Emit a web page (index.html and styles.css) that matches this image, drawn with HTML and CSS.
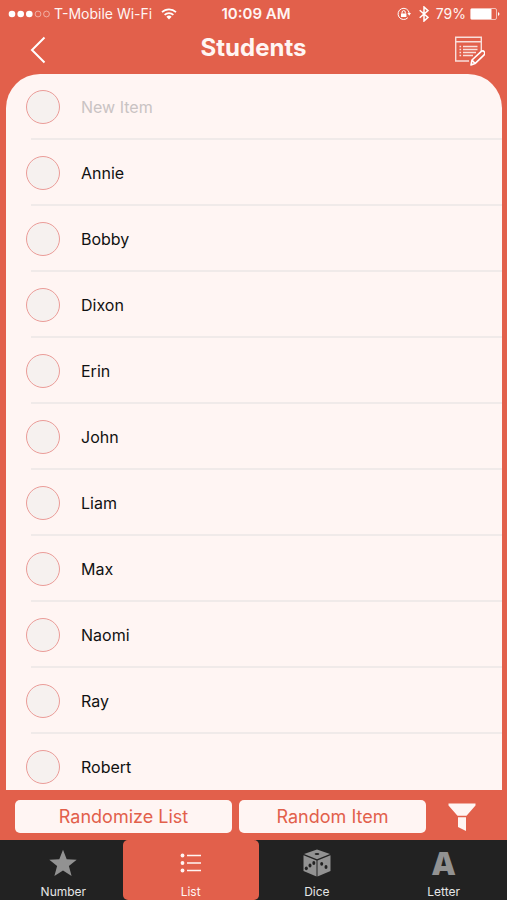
FILE: index.html
```html
<!DOCTYPE html>
<html lang="en">
<head>
<meta charset="utf-8">
<meta name="viewport" content="width=device-width, initial-scale=1">
<title>Students</title>
<link rel="stylesheet" href="styles.css">
</head>
<body>
<div class="status">
  <div class="status-side">
    <svg width="42" height="12" viewBox="0 0 42 12" aria-hidden="true">
      <g fill="#fff"><circle cx="4" cy="6" r="3.3"/><circle cx="12.7" cy="6" r="3.3"/><circle cx="21.3" cy="6" r="3.3"/></g>
      <g fill="none" stroke="#fff" stroke-opacity=".6" stroke-width=".8"><circle cx="30" cy="6" r="2.9"/><circle cx="38.5" cy="6" r="2.9"/></g>
    </svg>
    <span class="carrier">T-Mobile Wi-Fi</span>
    <svg class="wifi" width="16" height="12" viewBox="0 0 16 12" aria-hidden="true">
      <g fill="none" stroke="#fff" stroke-width="1.7"><path d="M1 4.2a10 10 0 0 1 14 0"/><path d="M3.6 6.9a6.3 6.3 0 0 1 8.8 0"/></g>
      <path fill="#fff" d="M8 11.5 5.4 8.8a3.8 3.8 0 0 1 5.2 0z"/>
    </svg>
  </div>
  <time class="clock">10:09 AM</time>
  <div class="status-side status-right">
    <svg width="14" height="14" viewBox="0 0 14 14" aria-hidden="true">
      <path fill="none" stroke="#fff" stroke-width="1" d="M10.8 10.7A5.6 5.6 0 1 1 12.2 6"/>
      <path fill="#fff" d="M10.4 6h3.6l-1.8 2.8zM4 6.4h5.4v3.7H4z"/>
      <path fill="none" stroke="#fff" stroke-width="1" d="M5.1 6.6V5.2a1.6 1.6 0 0 1 3.2 0v1.4"/>
    </svg>
    <svg class="bluetooth" width="10" height="16" viewBox="0 0 10 16" aria-hidden="true">
      <path fill="none" stroke="#fff" stroke-width="1.5" d="M.7 4.2 9 11.4 5 15V1l4 3.6-8.3 7.2"/>
    </svg>
    <span>79%</span>
    <svg class="battery" width="30" height="12" viewBox="0 0 30 12" aria-hidden="true">
      <rect x=".5" y=".5" width="26" height="11" rx="1.5" fill="none" stroke="#fff" stroke-opacity=".6"/>
      <path fill="#fff" d="M1 1h20.500v10H1zM28 4q3 2 0 4z"/>
    </svg>
  </div>
</div>

<header class="header">
  <button class="icon-button" type="button" aria-label="Back">
    <svg width="16" height="28" viewBox="0 0 16 28"><path fill="none" stroke="#fff" stroke-width="2" d="M14.500 1.500 2 14l12.500 12.500"/></svg>
  </button>
  <h1 class="title">Students</h1>
  <button class="icon-button" type="button" aria-label="Edit list">
    <svg width="32" height="32" viewBox="0 0 32 32">
      <g fill="none" stroke="#fff" stroke-opacity=".8" stroke-width="1.4">
        <path d="M16 27H2.700V3.200h25.600V17M2.700 7.700h25.600"/>
        <path d="M6.500 12.500h1.600M10 12.500h14.500M6.500 15.500h1.600M10 15.500h14.500M6.500 18.500h1.600M10 18.500h13M6.500 21.500h1.600M10 21.500h10"/>
      </g>
      <path fill="#e2604b" stroke="#fff" stroke-width="1.600" stroke-linejoin="round" d="m18 31 1-5L28.300 17.300q2-1 3 .6t-.2 3L22 29.600zM19 26l3 3.600"/>
    </svg>
  </button>
</header>

<main class="panel">
  <ul class="list">
    <li class="row"><input class="check" type="checkbox" aria-label="Select new item"><input class="new-item" type="text" placeholder="New Item" aria-label="New item"></li>
    <li class="row"><input class="check" type="checkbox" id="annie"><label for="annie">Annie</label></li>
    <li class="row"><input class="check" type="checkbox" id="bobby"><label for="bobby">Bobby</label></li>
    <li class="row"><input class="check" type="checkbox" id="dixon"><label for="dixon">Dixon</label></li>
    <li class="row"><input class="check" type="checkbox" id="erin"><label for="erin">Erin</label></li>
    <li class="row"><input class="check" type="checkbox" id="john"><label for="john">John</label></li>
    <li class="row"><input class="check" type="checkbox" id="liam"><label for="liam">Liam</label></li>
    <li class="row"><input class="check" type="checkbox" id="max"><label for="max">Max</label></li>
    <li class="row"><input class="check" type="checkbox" id="naomi"><label for="naomi">Naomi</label></li>
    <li class="row"><input class="check" type="checkbox" id="ray"><label for="ray">Ray</label></li>
    <li class="row"><input class="check" type="checkbox" id="robert"><label for="robert">Robert</label></li>
  </ul>
</main>

<div class="toolbar">
  <button class="action action-wide" type="button">Randomize List</button>
  <button class="action" type="button">Random Item</button>
  <button class="filter" type="button" aria-label="Filter">
    <svg width="28" height="28" viewBox="0 0 28 28" fill="#fff5f3"><path d="M.5.5h27v2L18.500 12.800h-9L.5 2.500zM10 14.300h8V28l-8-4z"/></svg>
  </button>
</div>

<nav class="tabs">
  <a class="tab" href="#number">
    <svg class="tab-icon" width="28" height="28" viewBox="0 0 28 28" fill="#929292"><path d="m14 .8 3.700 9.400 10 .5-7.800 6.400 2.700 9.900L14 21.500 5.400 27l2.700-9.900L.3 10.700l10-.5z"/></svg>
    <span>Number</span>
  </a>
  <a class="tab tab-active" href="#list" aria-current="page">
    <svg class="tab-icon" width="28" height="28" viewBox="0 0 28 28" fill="#fff5f3"><circle cx="5.500" cy="6.500" r="1.900"/><circle cx="5.500" cy="14" r="1.900"/><circle cx="5.500" cy="21.500" r="1.900"/><path d="M10 5.700h14v1.600H10zM10 13.200h14v1.600H10zM10 20.700h14v1.600H10z"/></svg>
    <span>List</span>
  </a>
  <a class="tab" href="#dice">
    <svg class="tab-icon" width="28" height="28" viewBox="0 0 28 28">
      <path fill="#929292" d="M14 .5 27 5 14 10.300 1 5zM.5 6.300l13 5.300v15.900L.5 22zM27.500 6.300l-13 5.300v15.900l13-5.500z"/>
      <g fill="#222"><ellipse cx="14" cy="5" rx="2.400" ry="1.100"/><ellipse cx="3.300" cy="19.300" rx="1.500" ry="1.900"/><ellipse cx="7" cy="16.500" rx="1.500" ry="1.900"/><ellipse cx="10.800" cy="14" rx="1.500" ry="1.900"/><ellipse cx="18.700" cy="14.800" rx="1.500" ry="1.900"/><ellipse cx="23" cy="18" rx="1.500" ry="1.900"/></g>
    </svg>
    <span>Dice</span>
  </a>
  <a class="tab" href="#letter">
    <span class="tab-icon tab-letter" aria-hidden="true">A</span>
    <span>Letter</span>
  </a>
</nav>
</body>
</html>
```
FILE: styles.css
```css
* {
  box-sizing: border-box;
}

body {
  display: flex;
  flex-direction: column;
  height: 100vh;
  margin: 0;
  background: #e2604b;
  color: #111;
  font: 16px/20px Inter, "Liberation Sans", sans-serif;
}

button {
  padding: 0;
  border: 0;
  background: none;
  font: inherit;
}

svg {
  display: block;
  flex: none;
}

.status {
  display: flex;
  align-items: center;
  height: 28px;
  padding: 0 7px 0 8px;
  color: #fff5f3;
  font-size: 14px;
}

.status-side {
  display: flex;
  flex: 1;
  align-items: center;
}

.status-right {
  justify-content: flex-end;
}

.carrier {
  margin: 0 9px 0 4px;
}

.clock {
  padding-left: 4px;
  font-size: 15px;
  font-weight: 600;
}

.bluetooth {
  margin: 0 7px 0 8px;
}

.battery {
  margin-left: 4px;
}

.header {
  display: flex;
  align-items: center;
  justify-content: space-between;
  height: 46px;
  padding: 0 18px 2px;
}

.icon-button {
  display: flex;
  align-items: center;
  justify-content: center;
  width: 40px;
  height: 40px;
}

.title {
  margin: 0;
  color: #fff5f3;
  font-size: 24px;
  font-weight: 700;
  line-height: 40px;
  padding-bottom: 4px;
}

.panel {
  flex: 1;
  min-height: 0;
  margin: 0 5px 0 6px;
  overflow-y: auto;
  scrollbar-width: none;
  border-radius: 34px 34px 0 0;
  background: #fff5f3;
}

.list {
  margin: 0;
  padding: 0 0 0 20px;
  list-style: none;
}

.row {
  display: flex;
  align-items: center;
  gap: 21px;
  height: 66px;
  background: linear-gradient(#f0eae9, #f0eae9) 5px 100% / 100% 2px no-repeat;
}

.check {
  appearance: none;
  flex: none;
  width: 34px;
  height: 34px;
  margin: 0;
  border: 1px solid #eb9c98;
  border-radius: 50%;
  background: #f6f1ef;
}

.check:checked {
  background: #e2604b;
}

.new-item {
  flex: 1;
  min-width: 0;
  padding: 0;
  border: 0;
  background: none;
  color: inherit;
  font: inherit;
}

.new-item::placeholder {
  color: #c9c3c3;
}

.toolbar {
  display: flex;
  gap: 7px;
  padding: 10px 16px 7px 15px;
}

.action {
  flex: 187;
  height: 33px;
  border-radius: 5px;
  background: #fff5f3;
  color: #e2604b;
  font-size: 18px;
}

.action-wide {
  flex-grow: 217;
}

.filter {
  display: flex;
  align-items: center;
  justify-content: center;
  width: 58px;
}

.tabs {
  display: grid;
  grid-template-columns: repeat(4, 1fr);
  height: 60px;
  background: #222;
}

.tab {
  display: flex;
  flex-direction: column;
  align-items: center;
  gap: 7px;
  padding-top: 9px;
  color: #e6e6e6;
  font-size: 12px;
  line-height: 16px;
  text-decoration: none;
}

.tab-active {
  margin: 0 -5px 0 -4px;
  border-radius: 5px;
  background: #e2604b;
  color: #fff5f3;
}

.tab-icon {
  height: 28px;
}

.tab-letter {
  color: #929292;
  font-family: "Open Sans", "Liberation Sans", sans-serif;
  font-size: 32px;
  font-weight: 800;
  line-height: 28px;
}
```
